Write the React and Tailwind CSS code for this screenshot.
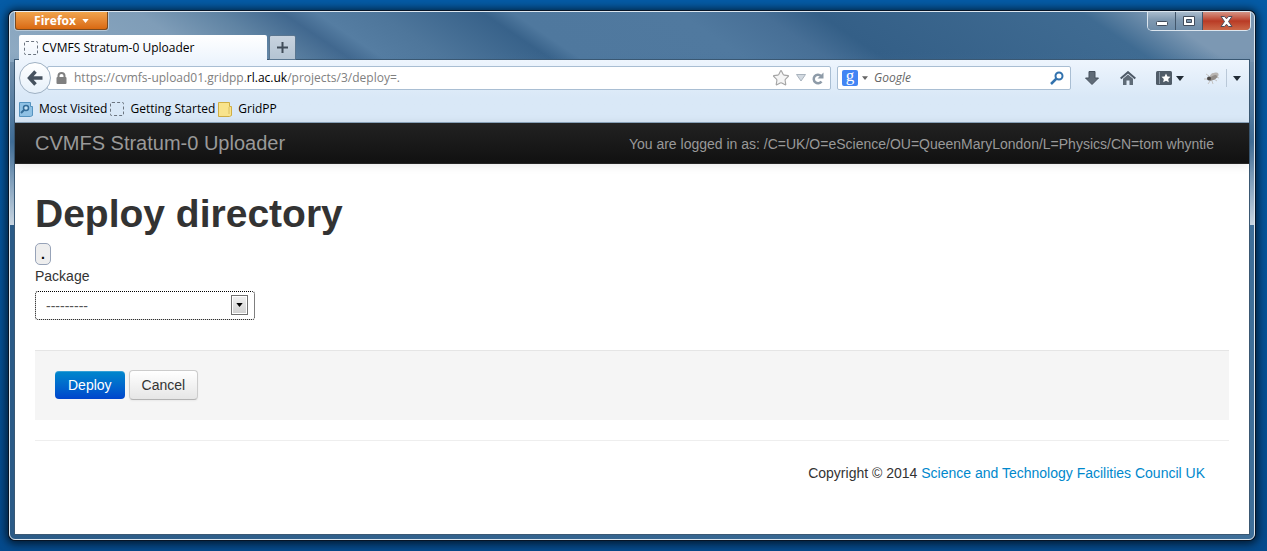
import { Star } from 'lucide-react'

const CHROME_FONT = "font-['Open_Sans','Noto_Sans',sans-serif]"
const PAGE_FONT = "font-['Liberation_Sans',Arial,sans-serif]"

// glass frame: light fade down the sides, dark lower part, diagonal sheen behind the tabs
const GLASS = '[background:linear-gradient(180deg,transparent_40px,#42709a_130px,#c8d5e1_213px,transparent_213px)_no-repeat,linear-gradient(90deg,#2b5b87,#3f6f99)_0_213px_no-repeat,linear-gradient(34deg,#8fabc3_0px,#7f9db8_112px,#5f83a3_157px,#41688f_193px,#557da2_212px,#4e769b_246px,#38628a_305px,#4f789e_322px,#50799f_414px,#476f96_460px,#345f87_492px,#3f6b92_640px,#7c98b3_682px,#7c98b3_100%)_0_0/100%_50px_no-repeat,#7592ad]'

function Caret({ className = '' }) {
  return (
    <svg width="8" height="5" viewBox="0 0 8 5" className={className} aria-hidden="true">
      <path d="M0 0h8L4 5z" fill="currentColor" />
    </svg>
  )
}

function BlankIcon() {
  return <span className="w-3.5 h-3.5 shrink-0 rounded-xs border border-dashed border-[#6c7580]" />
}

function WindowButtons() {
  return (
    <div className="flex h-[19px] mr-[-2px] rounded-b-[5px] border border-t-0 border-[#dbe5ee] overflow-hidden">
      <button aria-label="Minimize" className="w-7 flex items-center justify-center border-r border-[#42566b] bg-linear-to-b from-[#a9bccd] via-[#7f98b0] via-45% to-[#6e8ca8]">
        <svg width="12" height="12" viewBox="0 0 12 12">
          <rect x="0.5" y="6.5" width="11" height="4" rx="1" fill="#fff" stroke="#414c5c" />
        </svg>
      </button>
      <button aria-label="Maximize" className="w-[27px] flex items-center justify-center border-r border-[#42566b] bg-linear-to-b from-[#a9bccd] via-[#7f98b0] via-45% to-[#6e8ca8]">
        <svg width="12" height="10" viewBox="0 0 12 10">
          <path d="M0.5 0.5h11v9h-11z M3.5 3.5v3h5v-3z" fill="#fff" fillRule="evenodd" stroke="#414c5c" />
        </svg>
      </button>
      <button aria-label="Close" className="w-[47px] flex items-center justify-center bg-linear-to-b from-[#d49385] via-[#b93a25] via-50% to-[#cb6748]">
        <svg width="13" height="11" viewBox="0 0 13 11">
          <path d="M1 .5h3.500l2 2.300 2-2.300H12L8.500 5.500 12 10.500H8.500l-2-2.300-2 2.300H1l3.500-5z" fill="#fff" stroke="#4b4d5c" />
        </svg>
      </button>
    </div>
  )
}

function NavBar() {
  return (
    <div className="flex items-center h-9 pl-1 pr-2 text-[#4d5966]">
      <button aria-label="Back" className="relative z-10 w-8 h-8 shrink-0 rounded-full border border-[#9fb1c3] bg-linear-to-b from-white to-[#e6f0fa] flex items-center justify-center">
        <svg width="16" height="16" viewBox="0 0 16 16" fill="none" stroke="#46525f" strokeWidth="3.5">
          <path d="M8.500 1.500L2.500 8l6 6.500M3 8h12.500" />
        </svg>
      </button>
      <div className="flex-1 min-w-0 -ml-1 flex items-center h-6 pl-2 pr-1.5 border border-[#a9bed3] rounded-xs bg-white">
        <svg width="11" height="12" viewBox="0 0 11 12" className="shrink-0 mr-px">
          <path d="M2.500 6V3.800a3 2.800 0 0 1 6 0V6" fill="none" stroke="#808080" strokeWidth="2" />
          <rect x="0.500" y="5" width="10" height="7" rx="1" fill="#808080" />
        </svg>
        <a href="#url" className="flex-1 ml-1.5 text-[12px] text-[#808080] truncate">
          https://cvmfs-upload01.gridpp.<span className="text-black">rl.ac.uk</span>/projects/3/deploy=.
        </a>
        <Star size={18} strokeWidth={1.5} className="text-[#a5a5a5] fill-[#f5f5f5]" />
        <svg width="10" height="8" viewBox="0 0 10 8" className="mx-1.5"><path d="M.5.5h9L5 7z" fill="#d3dae1" stroke="#a9b3bd" /></svg>
        <svg width="12" height="13" viewBox="0 0 12 13">
          <path d="M9.500 9.500A4.300 4.300 0 1 1 9 3.800" fill="none" stroke="#8e9ba8" strokeWidth="2.500" />
          <path d="M11.500.5v6h-6z" fill="#8e9ba8" />
        </svg>
      </div>
      <div className="ml-1.5 w-[234px] flex items-center h-6 pl-1 pr-1.5 border border-[#a9bed3] rounded-xs bg-white">
        <span className="w-4 h-4 rounded-xs bg-[#4285f4] text-white text-[17px] leading-[11px] text-center font-['Liberation_Serif',serif]">g</span>
        <Caret className="ml-1 w-1.5 h-1 text-[#666]" />
        <input aria-label="Search" placeholder="Google" className="flex-1 min-w-0 ml-1.5 text-[12px] italic outline-none placeholder:text-[#666]" />
        <svg width="14" height="14" viewBox="0 0 14 14" fill="none" stroke="#3272ae">
          <circle cx="9" cy="5" r="3.5" strokeWidth="2" />
          <path d="M6.500 7.500L1 13" strokeWidth="2.5" />
        </svg>
      </div>
      <button aria-label="Downloads" className="ml-3.5">
        <svg width="14" height="14" viewBox="0 0 14 14"><path d="M4 .5h6V7h3.500L7 13.500.5 7H4z" fill="#5f6b77" stroke="#46515d" /></svg>
      </button>
      <button aria-label="Home" className="ml-[21px]">
        <svg width="16" height="14" viewBox="0 0 16 14">
          <path d="M.7 7.500L8 1.200l7.300 6.300" fill="none" stroke="#4d5966" strokeWidth="2" />
          <path d="M3 7.700l5-4.200 5 4.200V14H9.500V9.500h-3V14H3z" fill="#5f6b77" />
        </svg>
      </button>
      <button aria-label="Bookmarks" className="ml-5 flex items-center gap-1">
        <svg width="16" height="14" viewBox="0 0 16 14">
          <rect width="16" height="14" rx="1.5" fill="#505c68" />
          <path d="M3.500 1v12" stroke="#8794a1" />
          <path d="M10 2.500l1.400 2.900 3.100.4-2.300 2.200.6 3.200-2.800-1.500-2.800 1.500.6-3.200-2.300-2.200 3.100-.4z" fill="#fff" />
        </svg>
        <Caret className="text-[#222c36]" />
      </button>
      <button aria-label="Firebug" className="ml-5">
        <svg width="16" height="14" viewBox="0 0 16 14">
          <path d="M2 3l3 2M0 8h4M4 13l2-3M9 13l-1-3M13 10l-3-2M15 7l-3-1M8 2l1 2" stroke="#c4c3c2" />
          <ellipse cx="10" cy="5" rx="5" ry="3" transform="rotate(-28 10 5)" fill="#b8b5b2" />
          <ellipse cx="9" cy="7" rx="4.5" ry="2" transform="rotate(-28 9 7)" fill="#918c88" />
          <circle cx="5" cy="7.5" r="2" fill="#4b4846" />
        </svg>
      </button>
      <span className="ml-1.5 w-px h-[18px] bg-[#b9c8d8]" />
      <Caret className="ml-1.5 text-[#222c36]" />
    </div>
  )
}

function BookmarksBar() {
  return (
    <div className="flex items-center gap-[3px] h-[26px] pl-1 text-[12px] text-black">
      <a href="#most-visited" className="flex items-center gap-1.5">
        <svg width="14" height="15" viewBox="0 0 14 15">
          <path d="M.5.5h11v4h2v9l-2 1H.5z" fill="#8fc1e4" stroke="#5593bf" />
          <circle cx="7" cy="6" r="2.5" fill="#c4e1f4" stroke="#336c98" strokeWidth="1.5" />
          <path d="M5 8l-3 3" stroke="#336c98" strokeWidth="2" />
        </svg>
        Most Visited
      </a>
      <a href="#getting-started" className="flex items-center gap-1.5"><BlankIcon />Getting Started</a>
      <a href="#gridpp" className="flex items-center gap-1.5">
        <svg width="14" height="15" viewBox="0 0 14 15">
          <path d="M.5.5h11v4h2v9l-2 1H.5z" fill="#f8e38c" stroke="#cfae45" />
          <path d="M11 5v7" stroke="#dcc062" />
        </svg>
        GridPP
      </a>
    </div>
  )
}

function Page() {
  return (
    <div className={`flex-1 bg-white text-sm leading-5 text-[#333] ${PAGE_FONT}`}>
      <header className="flex items-center justify-between h-[41px] pl-5 pr-[35px] border-b border-[#252525] bg-linear-to-b from-[#222] to-[#111] text-[#999] shadow-[0_1px_10px_rgba(0,0,0,0.1)]">
        <a href="#home" className="text-xl leading-5">CVMFS Stratum-0 Uploader</a>
        <p className="pt-0.5">You are logged in as: /C=UK/O=eScience/OU=QueenMaryLondon/L=Physics/CN=tom whyntie</p>
      </header>
      <main className="px-5 pt-[30px]">
        <h1 className="text-[39px] leading-10 font-bold">Deploy directory</h1>
        <form onSubmit={e => e.preventDefault()}>
          <div className="mt-[9px] w-4 h-[22px] border border-[#97a3b8] rounded-[5px] bg-[#eee] text-black font-bold text-center">.</div>
          <label htmlFor="package" className="block mt-px">Package</label>
          <div className="relative mt-[5px] w-[220px]">
            <select id="package" className="block w-full h-[29px] px-2.5 appearance-none border border-dotted border-black rounded-[3px] bg-white text-[#555]">
              <option>---------</option>
            </select>
            <span className="absolute right-[7px] top-1 w-[17px] h-5 flex items-center justify-center border border-[#707070] bg-linear-to-b from-[#f2f2f2] to-[#cfcfcf] text-black shadow-[inset_0_0_0_1px_#fff] pointer-events-none">
              <Caret className="w-[7px] h-1" />
            </span>
          </div>
          <div className="mt-[30px] flex items-center gap-1 h-[70px] px-5 pb-0.5 border-t border-[#e5e5e5] bg-[#f5f5f5]">
            <button type="submit" className="h-7 px-[13px] rounded-sm bg-linear-to-b from-[#0088cc] to-[#0044cc] text-white shadow-[inset_0_1px_0_rgba(255,255,255,0.2)]">Deploy</button>
            <button type="button" className="h-[30px] px-3 rounded-sm border border-[#ccc] border-b-[#b3b3b3] bg-linear-to-b from-white to-[#e6e6e6] shadow-[0_1px_2px_rgba(0,0,0,0.05)]">Cancel</button>
          </div>
        </form>
        <hr className="mt-5 border-[#eee]" />
        <footer className="mt-[22px] pr-6 text-right">
          Copyright © 2014 <a href="#stfc" className="text-[#0088cc]">Science and Technology Facilities Council UK</a>
        </footer>
      </main>
    </div>
  )
}

export default function App() {
  return (
    <div className={`min-h-screen flex pt-[11px] pl-[9px] pr-3 pb-[11px] bg-linear-to-b from-[#055ba5] to-[#054a8c] ${CHROME_FONT}`}>
      <div className={`flex-1 min-w-0 flex flex-col px-[5px] pb-[5px] border border-[#dce6ef] rounded-md shadow-[0_0_0_1px_#061426,0_1px_9px_3px_rgba(0,0,0,0.65)] ${GLASS}`}>
        <div className="flex justify-between h-[23px]">
          <button className="h-[18px] w-[93px] flex items-center justify-center gap-1.5 rounded-b-[3px] border border-t-0 border-[#7a4a20] bg-linear-to-b from-[#f0a44c] to-[#d9690f] text-white text-[12px] font-bold shadow-[0_0_0_1px_rgba(255,255,255,0.4)]">
            Firefox <Caret className="w-[7px] h-1" />
          </button>
          <WindowButtons />
        </div>
        <div className="relative z-10 flex items-end gap-0.5 pl-1 h-[25px] text-[12px] text-black">
          <div className="flex items-center gap-1 w-[248px] h-[25px] pl-[5px] rounded-t-xs bg-linear-to-b from-white to-[#eef5fd]">
            <BlankIcon />
            <span>CVMFS Stratum-0 Uploader</span>
          </div>
          <button aria-label="New tab" className="w-[27px] h-[25px] flex items-center justify-center rounded-t-xs border border-[#5a7690] bg-linear-to-b from-[#c8d3df] to-[#b4c4d3]">
            <svg width="11" height="11" viewBox="0 0 11 11"><path d="M5.500 0v11M0 5.500h11" stroke="#404c59" strokeWidth="2" /></svg>
          </button>
        </div>
        <div className="flex-1 flex flex-col shadow-[0_0_0_1px_#3a5873]">
          <div className="border-b border-[#8da7bf] bg-linear-to-b from-[#eef5fd] to-[#d9e8f7] to-60%">
            <NavBar />
            <BookmarksBar />
          </div>
          <Page />
        </div>
      </div>
    </div>
  )
}
